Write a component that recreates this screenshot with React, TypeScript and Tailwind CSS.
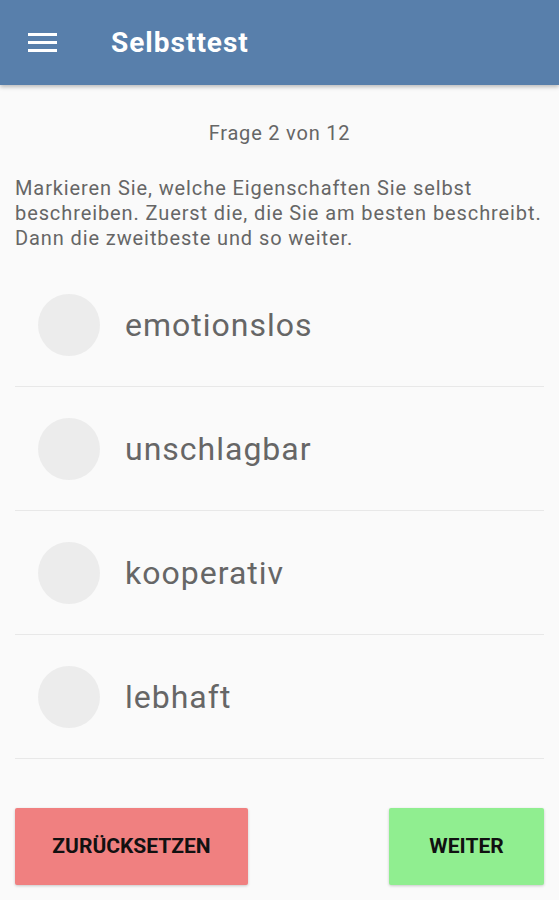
import React from "react";

const items = ["emotionslos", "unschlagbar", "kooperativ", "lebhaft"];

export default function App() {
  return (
    <div className="w-[559px] h-[900px] bg-[#fafafa] flex flex-col overflow-hidden" style={{ fontFamily: "Roboto, 'Noto Sans', sans-serif" }}>
      <header className="h-[85px] bg-[#587fab] flex items-center shadow-[0_2px_4px_rgba(0,0,0,0.25)] relative z-10 shrink-0">
        <div className="ml-[28px] w-[29px] flex flex-col gap-[5px]">
          <div className="h-[3px] bg-white" />
          <div className="h-[3px] bg-white" />
          <div className="h-[3px] bg-white" />
        </div>
        <h1 className="ml-[54px] text-white text-[28px] font-bold leading-none tracking-[1px]">Selbsttest</h1>
      </header>
      <main className="flex flex-col px-[15px]">
        <p className="text-center text-[20px] text-[#666] leading-[24px] mt-[36px] tracking-[0.8px]">Frage 2 von 12</p>
        <p className="text-[20px] text-[#666] leading-[25px] mt-[31px] tracking-[0.9px]">
          Markieren Sie, welche Eigenschaften Sie selbst beschreiben. Zuerst die, die Sie am besten beschreibt. Dann die zweitbeste und so weiter.
        </p>
        <ul className="flex flex-col mt-[12px]">
          {items.map((t) => (
            <li key={t} className="h-[124px] flex items-center border-b border-[#e8e8e8]">
              <div className="ml-[23px] w-[62px] h-[62px] rounded-full bg-[#ececec]" />
              <span className="ml-[25px] text-[32px] text-[#666] leading-none tracking-[1px]">{t}</span>
            </li>
          ))}
        </ul>
        <div className="flex justify-between mt-[49px]">
          <button className="w-[233px] h-[77px] bg-[#f08080] rounded-[2px] shadow-[0_1px_3px_rgba(0,0,0,0.2)] text-[21px] font-bold text-[#111]">ZURÜCKSETZEN</button>
          <button className="w-[155px] h-[77px] bg-[#90ee90] rounded-[2px] shadow-[0_1px_3px_rgba(0,0,0,0.2)] text-[21px] font-bold text-[#111]">WEITER</button>
        </div>
      </main>
    </div>
  );
}
